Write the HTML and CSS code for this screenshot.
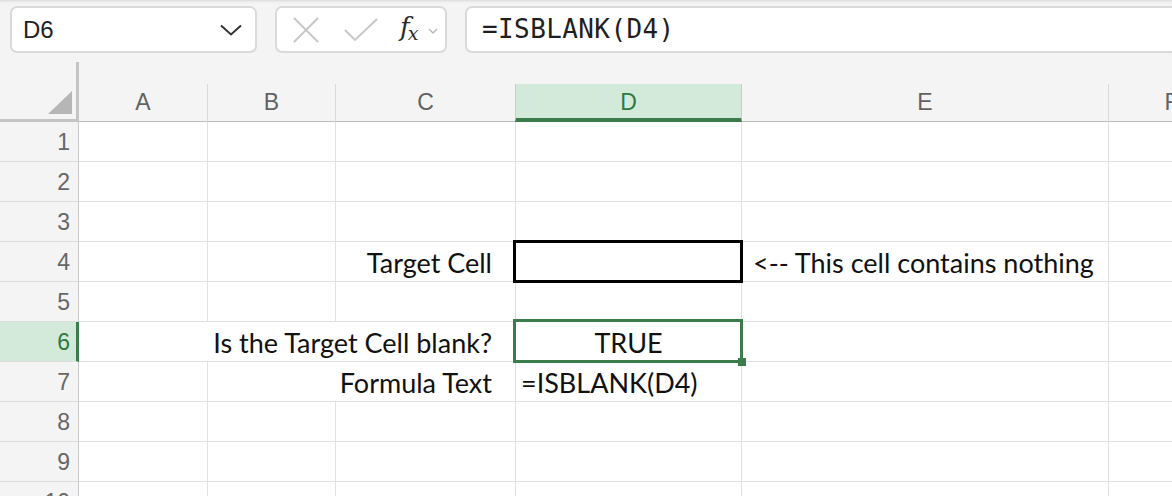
FILE: index.html
```html
<!DOCTYPE html>
<html lang="en">
<head>
  <meta charset="UTF-8">
  <title>ISBLANK example</title>
  <link rel="stylesheet" href="styles.css">
</head>
<body>

<div class="toolbar">
  <div class="namebox">
    <span>D6</span>
    <svg width="22" height="12" viewBox="0 0 22 12"><path d="M1 1.5 L11 10.5 L21 1.5" fill="none" stroke="#333" stroke-width="2"/></svg>
  </div>
  <div class="fxbox">
    <svg class="ico" width="28" height="26" viewBox="0 0 28 26"><path d="M2 1 L26 25 M26 1 L2 25" stroke="#c6c6c6" stroke-width="1.8" fill="none"/></svg>
    <svg class="ico" width="34" height="24" viewBox="0 0 34 24"><path d="M1 12 L11 22 L33 1" stroke="#c6c6c6" stroke-width="1.8" fill="none"/></svg>
    <span class="fx"><i>f</i><sub>x</sub></span>
    <svg class="ico small" width="10" height="6" viewBox="0 0 10 6"><path d="M1 1 L5 5 L9 1" stroke="#b5b5b5" stroke-width="1.3" fill="none"/></svg>
  </div>
  <div class="formula">=ISBLANK(D4)</div>
</div>

<div class="sheet">
  <div class="row head">
    <div class="corner"><span class="tri"></span></div>
    <div class="colhead">A</div>
    <div class="colhead">B</div>
    <div class="colhead">C</div>
    <div class="colhead active">D</div>
    <div class="colhead">E</div>
    <div class="colhead">F</div>
  </div>

  <div class="row">
    <div class="rowhead">1</div>
    <div class="cell"></div><div class="cell"></div><div class="cell"></div><div class="cell"></div><div class="cell"></div><div class="cell"></div>
  </div>
  <div class="row">
    <div class="rowhead">2</div>
    <div class="cell"></div><div class="cell"></div><div class="cell"></div><div class="cell"></div><div class="cell"></div><div class="cell"></div>
  </div>
  <div class="row">
    <div class="rowhead">3</div>
    <div class="cell"></div><div class="cell"></div><div class="cell"></div><div class="cell"></div><div class="cell"></div><div class="cell"></div>
  </div>
  <div class="row">
    <div class="rowhead">4</div>
    <div class="cell"></div><div class="cell"></div>
    <div class="cell right">Target Cell</div>
    <div class="cell target"></div>
    <div class="cell note">&lt;-- This cell contains nothing</div>
    <div class="cell"></div>
  </div>
  <div class="row">
    <div class="rowhead">5</div>
    <div class="cell"></div><div class="cell"></div><div class="cell"></div><div class="cell"></div><div class="cell"></div><div class="cell"></div>
  </div>
  <div class="row">
    <div class="rowhead active">6</div>
    <div class="cell right span3">Is the Target Cell blank?</div>
    <div class="cell center selected">TRUE<span class="handle"></span></div>
    <div class="cell"></div><div class="cell"></div>
  </div>
  <div class="row">
    <div class="rowhead">7</div>
    <div class="cell"></div>
    <div class="cell right span2">Formula Text</div>
    <div class="cell">=ISBLANK(D4)</div>
    <div class="cell"></div><div class="cell"></div>
  </div>
  <div class="row">
    <div class="rowhead">8</div>
    <div class="cell"></div><div class="cell"></div><div class="cell"></div><div class="cell"></div><div class="cell"></div><div class="cell"></div>
  </div>
  <div class="row">
    <div class="rowhead">9</div>
    <div class="cell"></div><div class="cell"></div><div class="cell"></div><div class="cell"></div><div class="cell"></div><div class="cell"></div>
  </div>
  <div class="row">
    <div class="rowhead">10</div>
    <div class="cell"></div><div class="cell"></div><div class="cell"></div><div class="cell"></div><div class="cell"></div><div class="cell"></div>
  </div>
</div>

</body>
</html>
```

FILE: styles.css
```css
body {
  margin: 0;
  width: 1172px;
  height: 496px;
  overflow: hidden;
  background: #fff;
  font-family: "Liberation Sans", Arial, sans-serif;
}

/* formula bar */
.toolbar {
  display: flex;
  gap: 18px;
  height: 62px;
  box-sizing: border-box;
  padding: 6px 0 0 10px;
  background: #f4f4f4;
  box-shadow: inset 0 3px 3px -2px #d6d6d6;
}
.namebox, .fxbox, .formula {
  height: 47px;
  box-sizing: border-box;
  background: #fff;
  border: 2px solid #dadada;
  border-radius: 7px;
  display: flex;
  align-items: center;
}
.namebox {
  width: 247px;
  padding: 0 13px 0 11px;
  justify-content: space-between;
  font-size: 24px;
  color: #1f1f1f;
}
.fxbox {
  width: 172px;
  padding: 0 0 0 15px;
}
.fxbox .ico {
  margin-right: 24px;
}
.fxbox .ico.small {
  margin: 2px 0 0 0;
}
.fx {
  font-family: "DejaVu Serif", serif;
  font-size: 26px;
  color: #2a2a2a;
  margin: -4px 10px 0 -2px;
}
.fx sub {
  font-size: 19px;
  font-style: italic;
  vertical-align: -4px;
  margin-left: -2px;
}
.formula {
  flex: 1;
  margin-right: -20px;
  padding: 0 0 2px 15px;
  font-family: "DejaVu Sans Mono", monospace;
  font-size: 26px;
  letter-spacing: 0.4px;
  color: #1f1f1f;
}

/* grid */
.row {
  display: grid;
  grid-template-columns: 79px 129px 128px 180px 226px 367px 126px;
  height: 40px;
}
.row.head {
  height: 60px;
  background: #f4f4f4;
}
.corner {
  position: relative;
  box-sizing: border-box;
  border-right: 3px solid #c4c4c4;
  border-bottom: 3px solid #c4c4c4;
}
.tri {
  position: absolute;
  right: 4px;
  bottom: 5px;
  width: 0;
  height: 0;
  border-left: 24px solid transparent;
  border-bottom: 23px solid #b6b6b6;
}
.colhead {
  align-self: end;
  height: 38px;
  box-sizing: border-box;
  border-right: 1px solid #d9d9d9;
  border-bottom: 1px solid #bdbdbd;
  display: flex;
  align-items: center;
  justify-content: center;
  font-size: 23px;
  color: #626262;
}
.colhead.active {
  background: #d3eadb;
  color: #2f7a3f;
  border-left: 1px solid #b7d9c2;
  border-right-color: #b7d9c2;
  border-bottom: 4px solid #3a7d4a;
  margin-left: -1px;
  padding-top: 3px;
}

.rowhead {
  box-sizing: border-box;
  background: #f4f4f4;
  border-right: 1px solid #c8c8c8;
  border-bottom: 1px solid #dcdcdc;
  display: flex;
  align-items: center;
  justify-content: flex-end;
  padding: 2px 8px 0 0;
  font-size: 23px;
  color: #666;
}
.rowhead.active {
  background: #d3eadb;
  color: #2f7a3f;
  border-right: 3px solid #3a7d4a;
  padding-right: 6px;
}

.cell {
  box-sizing: border-box;
  border-right: 1px solid #e1e1e1;
  border-bottom: 1px solid #e1e1e1;
  display: flex;
  align-items: center;
  padding: 2px 5px 0;
  font-family: Lato, "Liberation Sans", sans-serif;
  font-size: 27px;
  color: #111;
  white-space: nowrap;
}
.cell.right {
  justify-content: flex-end;
  padding-right: 23px;
}
.cell.center {
  justify-content: center;
}
.cell.note {
  padding-left: 11px;
}
.span2 { grid-column: span 2; }
.span3 { grid-column: span 3; }

.target, .selected {
  position: relative;
}
.target::after {
  content: "";
  position: absolute;
  left: -3px;
  top: -2px;
  right: -2px;
  bottom: -2px;
  border: 3px solid #000;
}
.selected::after {
  content: "";
  position: absolute;
  left: -3px;
  top: -3px;
  right: -2px;
  bottom: -2px;
  border: 3px solid #3a7d4a;
}
.handle {
  position: absolute;
  right: -5px;
  bottom: -5px;
  width: 8px;
  height: 8px;
  background: #3a7d4a;
  z-index: 1;
}
```
